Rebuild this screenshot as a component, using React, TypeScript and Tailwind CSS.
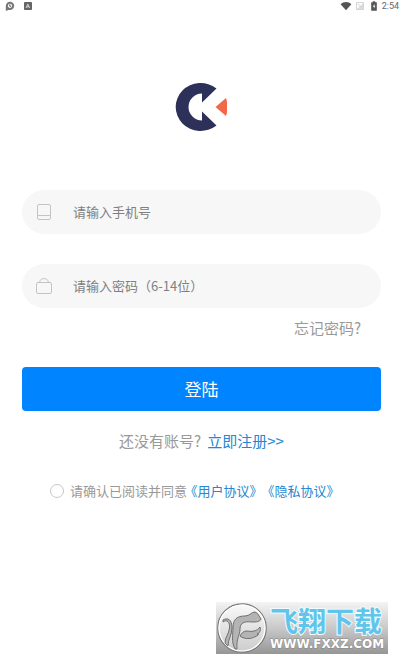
import type { ReactNode } from "react";

function StatusBar() {
  return (
    <header className="flex h-3 items-center justify-between pl-1 pr-px text-[#666]">
      <div className="flex items-center gap-2">
        <svg className="h-3 w-3" viewBox="0 0 12 12" fill="none">
          <path d="M1.8 11V6a4.2 4.2 0 1 1 4.2 4.1H4.2Z" fill="#777" />
          <circle cx="6" cy="5.8" r="2.1" fill="#fff" />
          <path d="M5.8 4.4v1.8h1.3" stroke="#555" strokeWidth="1" />
        </svg>
        <svg className="h-2 w-2" viewBox="0 0 8 8" fill="none">
          <rect width="8" height="8" rx="0.8" fill="#666" />
          <path d="M2 6 3.8 2 5.6 6M2.7 4.8h2.2" stroke="#ddd" strokeWidth="0.9" />
        </svg>
      </div>
      <div className="flex items-center">
        <svg className="h-3 w-3" viewBox="0 0 12 12">
          <path d="M0.6 4.2C3.6 1.2 8.4 1.2 11.4 4.2L6 10.2Z" fill="#555" />
        </svg>
        <svg className="ml-1 h-2 w-2" viewBox="0 0 8 8" fill="none">
          <path d="M0.5 7.5 7.5 0.5V7.5Z" fill="#ddd" />
          <path d="M0.5 0.5h7v7h-7ZM1.5 1.5l5 5" stroke="#ccc" strokeWidth="0.8" />
        </svg>
        <svg className="ml-1.5 h-2.5 w-2" viewBox="0 0 8 10">
          <path d="M1.2 1.3h1.6V0.3h2.4v1h1.6v8.4H1.2Z" fill="#555" />
          <path d="M4.4 2.8 2.8 5.8h1.1v2l1.5-3H4.4Z" fill="#eee" />
        </svg>
        <span className="ml-1 font-['Roboto',sans-serif] text-[9px] leading-3">2:54</span>
      </div>
    </header>
  );
}

function Logo() {
  return (
    <svg className="mx-auto mt-[70px] h-[50px] w-[54px]" viewBox="0 0 54 50" role="img" aria-label="CK">
      <path
        d="M43.5 6.4A25 24 0 1 0 43.5 43.6L29 29.5V38.5A13.5 13.5 0 0 1 29 11.5V20.5Z"
        fill="#2d3058"
      />
      <path d="M42.5 25 53 16C55 22 55 28 53 34Z" fill="#f2694a" />
    </svg>
  );
}

type FieldProps = {
  id: string;
  type: string;
  label: string;
  icon: ReactNode;
};

function Field({ id, type, label, icon }: FieldProps) {
  return (
    <div className="flex h-11 items-center rounded-full bg-[#f7f7f7] pl-3.5 pr-5">
      <label htmlFor={id} aria-label={label} className="shrink-0">
        {icon}
      </label>
      <input
        id={id}
        type={type}
        placeholder={label}
        className="ml-[21px] h-full min-w-0 flex-1 bg-transparent pb-0.5 text-[13px] text-[#666] outline-none placeholder:text-[#808080]"
      />
    </div>
  );
}

function PhoneIcon() {
  return (
    <svg className="h-4 w-4" viewBox="0 0 16 16" fill="none" stroke="#c4c4c4" strokeWidth="1">
      <rect x="1.5" y="0.5" width="13" height="15" rx="1.5" />
      <path d="M1.5 11.5h13" />
    </svg>
  );
}

function LockIcon() {
  return (
    <svg className="h-4 w-4" viewBox="0 0 16 16" fill="none" stroke="#c4c4c4" strokeWidth="1">
      <rect x="0.5" y="4.5" width="15" height="11" rx="1.5" />
      <path d="M3.5 4.5C3.9 1.9 5.3 0.6 8 0.6s4.1 1.3 4.5 3.9" />
    </svg>
  );
}

function Watermark() {
  return (
    <footer className="ml-auto mr-3 mt-[101px] flex h-[52px] w-[172px] items-center bg-linear-to-b from-[#f4f4f4] via-[#c9c9c9] to-[#969696]">
      <svg className="ml-px h-[50px] w-[50px] shrink-0" viewBox="0 0 50 50">
        <defs>
          <linearGradient id="disc" x1="0" y1="0" x2="0" y2="1">
            <stop offset="0" stopColor="#fafafa" />
            <stop offset="1" stopColor="#cccccc" />
          </linearGradient>
        </defs>
        <circle cx="25" cy="25" r="24.2" fill="url(#disc)" stroke="#777" strokeWidth="1.2" />
        <circle cx="25" cy="25" r="23" fill="none" stroke="#fff" strokeWidth="1.2" />
        <g fill="#b4b4b4" stroke="#707070" strokeWidth="1" strokeLinejoin="round">
          <path d="M6 19C10 16 13 19 12.5 25C12 31 8 34 8 40L11 43C11 36 15 32 15 25C15 17 11 14 6 17Z" />
          <path d="M18 46C14 38 16 32 16 25C16 16 20 13 28 13C33 13 34 9 38 9C41 10 42 13 44 16C43 19 39 19 35 19C27 18 23 20 23 26C23 32 19 36 20 46Z" />
          <path d="M23 33C25 30 26 28 30 28C36 29 40 28 43 24C44 27 43 30 40 31C42 31 42 31 41 32C36 36 28 37 23 33Z" />
        </g>
      </svg>
      <div className="ml-[3px] whitespace-nowrap">
        <p className="font-['Noto_Sans_CJK_SC',sans-serif] text-[28px] font-bold leading-8 text-[#61c5ea] [paint-order:stroke_fill] [-webkit-text-stroke:2px_#f2fbff]">
          飞翔下载
        </p>
        <p className="font-['DejaVu_Sans',sans-serif] text-[12px] font-bold leading-4 text-white [paint-order:stroke_fill] [-webkit-text-stroke:1px_#888]">
          WWW.FXXZ.COM
        </p>
      </div>
    </footer>
  );
}

export default function App() {
  return (
    <div className="min-h-screen overflow-hidden bg-white font-['Noto_Sans_CJK_SC',sans-serif]">
      <StatusBar />
      <main>
        <Logo />
        <form className="ml-[22px] mr-[19px] mt-[58px]" onSubmit={(e) => e.preventDefault()}>
          <div className="flex flex-col gap-[30px]">
            <Field id="phone" type="tel" label="请输入手机号" icon={<PhoneIcon />} />
            <Field id="password" type="password" label="请输入密码（6-14位）" icon={<LockIcon />} />
          </div>
          <div className="mt-2 flex justify-end pr-5 text-[15px] leading-6">
            <a href="#forgot" className="text-[#999]">忘记密码?</a>
          </div>
          <button
            type="submit"
            className="mt-[27px] h-11 w-full rounded-sm bg-[#0084ff] text-[17px] text-white"
          >
            登陆
          </button>
          <p className="mt-[18px] text-center text-[15px] leading-6 text-[#999]">
            还没有账号?
            <a href="#register" className="ml-1.5 text-[#2388d1]">立即注册&gt;&gt;</a>
          </p>
          <div className="mt-7 flex items-center pl-7 text-[13px] leading-5 text-[#999]">
            <input
              id="agree"
              type="checkbox"
              className="h-3.5 w-3.5 shrink-0 appearance-none rounded-full border border-[#c8c8c8] bg-white checked:bg-[#0084ff]"
            />
            <label htmlFor="agree" className="ml-1.5 whitespace-nowrap">请确认已阅读并同意</label>
            <div className="ml-1 flex gap-3 whitespace-nowrap text-[#2388d1] [font-feature-settings:'halt']">
              <a href="#terms">《用户协议》</a>
              <a href="#privacy">《隐私协议》</a>
            </div>
          </div>
        </form>
      </main>
      <Watermark />
    </div>
  );
}
